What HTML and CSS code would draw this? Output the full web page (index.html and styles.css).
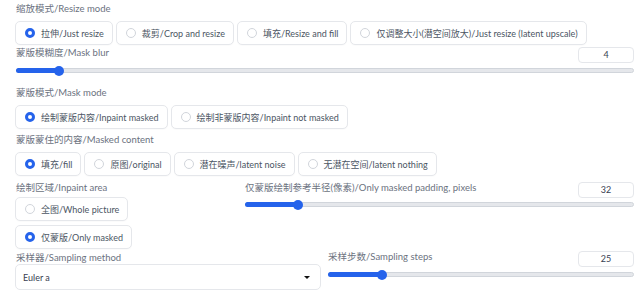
FILE: index.html
```html
<!DOCTYPE html>
<html>
<head>
<meta charset="utf-8">
<link rel="stylesheet" href="styles.css">
</head>
<body>
<div class="page">
  <div class="lbl l1">缩放模式/Resize mode</div>
  <div class="radios r1">
    <div class="opt on"><span class="dot"></span>拉伸/Just resize</div>
    <div class="opt"><span class="dot"></span>裁剪/Crop and resize</div>
    <div class="opt"><span class="dot"></span>填充/Resize and fill</div>
    <div class="opt"><span class="dot"></span>仅调整大小(潜空间放大)/Just resize (latent upscale)</div>
  </div>

  <div class="slider s1">
    <div class="shead"><span class="lbl">蒙版模糊度/Mask blur</span><span class="num">4</span></div>
    <div class="track"><div class="fill" style="width:42px"></div><div class="thumb" style="left:42px"></div></div>
  </div>

  <div class="lbl l3">蒙版模式/Mask mode</div>
  <div class="radios">
    <div class="opt on"><span class="dot"></span>绘制蒙版内容/Inpaint masked</div>
    <div class="opt"><span class="dot"></span>绘制非蒙版内容/Inpaint not masked</div>
  </div>

  <div class="lbl l4">蒙版蒙住的内容/Masked content</div>
  <div class="radios">
    <div class="opt on"><span class="dot"></span>填充/fill</div>
    <div class="opt"><span class="dot"></span>原图/original</div>
    <div class="opt"><span class="dot"></span>潜在噪声/latent noise</div>
    <div class="opt"><span class="dot"></span>无潜在空间/latent nothing</div>
  </div>

  <div class="split s5">
    <div class="leftcol">
      <div class="lbl">绘制区域/Inpaint area</div>
      <div class="stack">
        <div class="opt"><span class="dot"></span>全图/Whole picture</div>
        <div class="opt on"><span class="dot"></span>仅蒙版/Only masked</div>
      </div>
    </div>
    <div class="slider grow pad">
      <div class="shead"><span class="lbl">仅蒙版绘制参考半径(像素)/Only masked padding, pixels</span><span class="num">32</span></div>
      <div class="track"><div class="fill" style="width:52px"></div><div class="thumb" style="left:52px"></div></div>
    </div>
  </div>

  <div class="split s6">
    <div class="sampler">
      <div class="lbl">采样器/Sampling method</div>
      <div class="select"><span>Euler a</span><span class="caret"></span></div>
    </div>
    <div class="slider grow steps">
      <div class="shead"><span class="lbl">采样步数/Sampling steps</span><span class="num">25</span></div>
      <div class="track"><div class="fill" style="width:53px"></div><div class="thumb" style="left:53px"></div></div>
    </div>
  </div>
</div>
</body>
</html>
```
FILE: styles.css
```css
* { box-sizing: border-box; }
html, body { margin: 0; padding: 0; background: #fff; }
body {
  font-family: Lato, "Noto Sans CJK SC", sans-serif;
  font-size: 9px;
  color: #374151;
  width: 640px;
  height: 293px;
  overflow: hidden;
}
.page {
  padding: 2px 6px 0 15px;
  display: flex;
  flex-direction: column;
}
.lbl {
  color: #6b7280;
  font-size: 9.5px;
  line-height: 13px;
  height: 13px;
  padding-left: 1px;
  white-space: nowrap;
}
.radios {
  display: flex;
  gap: 3px;
  margin-top: 6px;
}
.opt {
  display: flex;
  align-items: center;
  height: 24px;
  padding: 0 8px 0 9px;
  border: 1px solid #e5e7eb;
  border-radius: 5px;
  background: #fff;
  white-space: nowrap;
  line-height: 13px;
  font-size: 9px;
  color: #4b5563;
  box-shadow: 0 1px 1px rgba(0,0,0,0.02);
}
.dot {
  width: 10px;
  height: 10px;
  border-radius: 50%;
  border: 1px solid #d1d5db;
  background: #fff;
  margin-right: 6px;
  flex: none;
}
.opt.on .dot {
  border: 3px solid #2563eb;
  background: #fff;
}
.slider { display: flex; flex-direction: column; }
.s1 { margin-top: 1px; }
.shead {
  display: flex;
  justify-content: space-between;
  align-items: flex-start;
  height: 16px;
}
.num {
  width: 56px;
  height: 16px;
  border: 1px solid #e5e7eb;
  border-radius: 4px;
  text-align: center;
  font-size: 9px;
  line-height: 14px;
  color: #374151;
  margin-top: 1px;
}
.track {
  position: relative;
  height: 5px;
  margin: 6px 0 0 1px;
  border: 1px solid #d1d5db;
  border-radius: 3px;
  background: #e5e7eb;
}
.fill {
  position: absolute;
  left: -1px;
  top: -1px;
  height: 5px;
  background: #2563eb;
  border-radius: 3px;
}
.thumb {
  position: absolute;
  top: -3.5px;
  width: 10px;
  height: 10px;
  margin-left: -5px;
  border-radius: 50%;
  background: #2563eb;
}
.l3 { margin-top: 13px; }
.l4 { margin-top: 4px; }
.split {
  display: flex;
  align-items: flex-start;
}
.s5 { margin-top: 5px; }
.leftcol { width: 229px; flex: none; }
.stack {
  display: flex;
  flex-direction: column;
  align-items: flex-start;
  gap: 4px;
  margin-top: 3px;
}
.grow { flex: 1; }
.pad .track { margin-top: 5px; }
.s6 { margin-top: 2px; }
.sampler { width: 306px; flex: none; }
.select {
  height: 26px;
  border: 1px solid #e5e7eb;
  border-radius: 5px;
  display: flex;
  align-items: center;
  justify-content: space-between;
  padding: 0 10px 0 7px;
  font-size: 9px;
  color: #374151;
}
.caret {
  width: 0; height: 0;
  border-left: 3px solid transparent;
  border-right: 3px solid transparent;
  border-top: 3px solid #111;
}
.steps { margin-left: 6px; margin-top: -1px; }
.steps .track { margin-top: 6px; }
```
